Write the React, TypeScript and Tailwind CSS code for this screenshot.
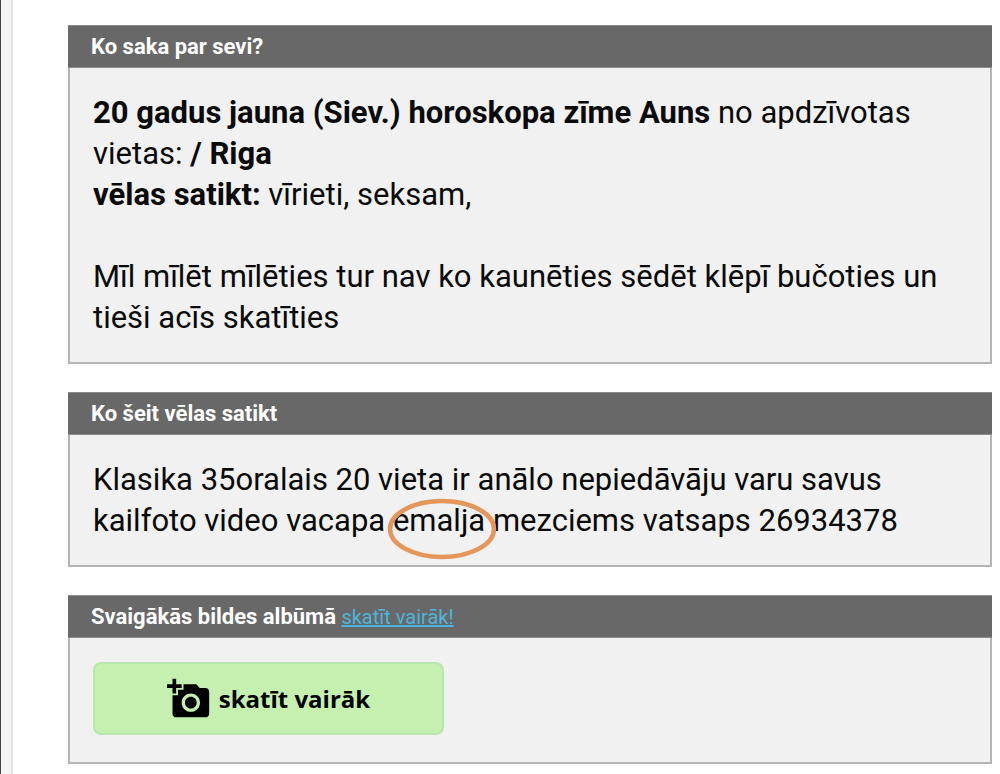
import type { ReactNode } from "react";
import { MdAddAPhoto } from "react-icons/md";

function Panel({ title, children }: { title: ReactNode; children: ReactNode }) {
  return (
    <section className="border-2 border-t-0 border-[#b4b4b4] bg-[#f1f1f1]">
      <h2 className="-mx-0.5 border-y border-t-[#8c8c8c] border-b-[#8c8c8c] bg-[#686868] px-[23px] pt-[7px] pb-1.5 text-[22px] leading-7 font-bold text-white">
        {title}
      </h2>
      <div className="px-[23px] py-6 text-[31px] leading-[41px] text-[#0a0a0a]">{children}</div>
    </section>
  );
}

export default function App() {
  return (
    <div className="flex min-h-screen bg-white font-['Roboto',sans-serif]">
      <div className="w-[13px] shrink-0 border-r-2 border-l border-l-[#444444] border-r-[#e2e2e2] bg-[#f5f5f5]" />
      <main className="flex min-w-0 flex-1 flex-col gap-7 pt-[25px] pr-2 pb-2.5 pl-[55px]">
        <Panel title="Ko saka par sevi?">
          <p>
            <b>20 gadus jauna (Siev.) horoskopa zīme Auns</b> no apdzīvotas vietas: <b>/ Riga</b>
            <br />
            <b>vēlas satikt:</b> vīrieti, seksam,
          </p>
          <p className="mt-[41px]">
            Mīl mīlēt mīlēties tur nav ko kaunēties sēdēt klēpī bučoties un tieši acīs skatīties
          </p>
        </Panel>
        <Panel title="Ko šeit vēlas satikt">
          <p>
            Klasika 35oralais 20 vieta ir anālo nepiedāvāju varu savus kailfoto video vacapa{" "}
            <span className="relative">
              emalja
              <svg
                className="absolute -top-1 -left-1.5 h-[62px] w-[110px]"
                viewBox="0 0 110 62"
                fill="none"
                aria-hidden="true"
              >
                <ellipse cx="55" cy="31" rx="52" ry="28" stroke="#e5965a" strokeWidth="4.5" />
              </svg>
            </span>{" "}
            mezciems vatsaps 26934378
          </p>
        </Panel>
        <Panel
          title={
            <>
              Svaigākās bildes albūmā{" "}
              <a href="#album" className="text-xl font-normal text-[#4eb4dc] underline">
                skatīt vairāk!
              </a>
            </>
          }
        >
          <button
            type="button"
            className="mb-[3px] flex h-[73px] w-[351px] items-center justify-center gap-2 rounded-lg border-2 border-[#b9e6b0] bg-[#c5f0b0] font-['Open_Sans',sans-serif] text-2xl font-bold text-black"
          >
            <MdAddAPhoto className="size-11" aria-hidden="true" />
            skatīt vairāk
          </button>
        </Panel>
      </main>
    </div>
  );
}
